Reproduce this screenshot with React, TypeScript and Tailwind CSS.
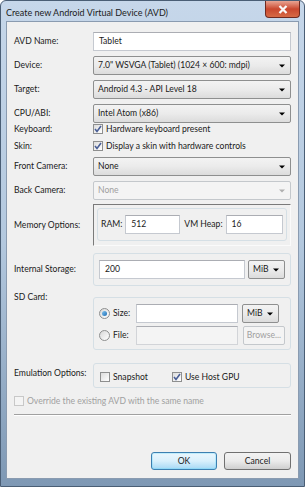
import React from "react";

const font = { fontFamily: "Lato, 'Noto Sans', sans-serif" };

const TextBox = ({ value = "", className = "", disabled = false }: { value?: string; className?: string; disabled?: boolean }) => (
  <div
    className={`h-[19px] flex items-center pl-[5px] border border-[#c5c9d0] border-t-[#abadb3] ${
      disabled ? "bg-[#f4f4f4] border-[#d2d4d8]" : "bg-white"
    } ${className}`}
  >
    {value}
  </div>
);

const Arrow = ({ color = "#000" }: { color?: string }) => (
  <svg width="6" height="4" viewBox="0 0 6 4">
    <path d="M0 0.5 L6 0.5 L3 3.5 Z" fill={color} />
  </svg>
);

const Combo = ({ value, disabled = false, className = "" }: { value: string; disabled?: boolean; className?: string }) => (
  <div
    className={`h-[19px] flex items-center justify-between pl-[4px] pr-[5px] rounded-[2px] border ${
      disabled
        ? "border-[#c4c8cc] bg-[#f4f4f4] text-[#a0a0a0]"
        : "border-[#8e8f8f] bg-gradient-to-b from-[#f3f3f3] via-[#ebebeb] to-[#dcdcdc]"
    } ${className}`}
  >
    <span>{value}</span>
    <Arrow color={disabled ? "#b0b0b0" : "#000"} />
  </div>
);

const Check = ({ checked = false, disabled = false }: { checked?: boolean; disabled?: boolean }) => (
  <div
    className={`w-[10px] h-[10px] border flex items-center justify-center ${
      disabled ? "border-[#c8c8c8] bg-[#f4f4f4]" : "border-[#8e8f8f] bg-gradient-to-br from-[#dcdcdc] to-white"
    }`}
  >
    {checked && (
      <svg width="8" height="8" viewBox="0 0 8 8">
        <path d="M1 4 L3 6.5 L7 1" fill="none" stroke="#4a5f97" strokeWidth="1.6" />
      </svg>
    )}
  </div>
);

const Radio = ({ checked = false }: { checked?: boolean }) => (
  <div className="w-[11px] h-[11px] rounded-full border border-[#8e8f8f] bg-gradient-to-br from-[#d8d8d8] to-white flex items-center justify-center">
    {checked && <div className="w-[5px] h-[5px] rounded-full bg-gradient-to-br from-[#7fc3f0] to-[#1a6fb5]" />}
  </div>
);

const Row = ({ label, children, className = "" }: { label: string; children: React.ReactNode; className?: string }) => (
  <div className={`flex items-center ${className}`}>
    <div className="w-[79px] shrink-0">{label}</div>
    <div className="flex-1">{children}</div>
  </div>
);

const GroupBox = ({ children, className = "" }: { children: React.ReactNode; className?: string }) => (
  <div className={`border border-[#d5dfe5] rounded-[3px] ${className}`}>{children}</div>
);

export default function App() {
  return (
    <div className="w-[305px] h-[487px] bg-white text-[8.6px] text-[#1a1a1a]" style={font}>
      <div className="w-[305px] h-[487px] flex flex-col rounded-t-[6px] border border-[#4a5e75] bg-gradient-to-b from-[#c6d7ea] via-[#b3c8de] to-[#7e98b4] overflow-hidden">
        {/* title bar */}
        <div className="h-[20px] flex items-start justify-between pl-[5px] shrink-0">
          <div className="pt-[5px] text-[9px] text-[#1b1b1b]">Create new Android Virtual Device (AVD)</div>
          <div className="w-[35px] h-[17px] mr-[4px] rounded-b-[4px] border border-t-0 border-[#6e2a20] bg-gradient-to-b from-[#e8a493] via-[#c9472e] to-[#d66a45] flex items-center justify-center">
            <svg width="10" height="9" viewBox="0 0 10 9">
              <path d="M1.5 1 L8.5 8 M8.5 1 L1.5 8" stroke="#ffffff" strokeWidth="2.2" />
              <path d="M1.5 1 L8.5 8 M8.5 1 L1.5 8" stroke="#f4f4f4" strokeWidth="1" />
            </svg>
          </div>
        </div>
        {/* client */}
        <div className="flex-1 mx-[5px] mb-[7px] border border-[#8a9bb0] bg-[#f0f0f0] pl-[7px] pr-[7px] pt-[10px] flex flex-col">
          <Row label="AVD Name:">
            <TextBox value="Tablet" />
          </Row>
          <Row label="Device:" className="mt-[5px]">
            <Combo value={'7.0" WSVGA (Tablet) (1024 × 600: mdpi)'} />
          </Row>
          <Row label="Target:" className="mt-[5px]">
            <Combo value="Android 4.3 - API Level 18" />
          </Row>
          <Row label="CPU/ABI:" className="mt-[5px]">
            <Combo value="Intel Atom (x86)" />
          </Row>
          <Row label="Keyboard:" className="h-[13px]">
            <div className="flex items-center gap-[3px]">
              <Check checked />
              <span>Hardware keyboard present</span>
            </div>
          </Row>
          <Row label="Skin:" className="h-[13px] mt-[4px]">
            <div className="flex items-center gap-[3px]">
              <Check checked />
              <span>Display a skin with hardware controls</span>
            </div>
          </Row>
          <Row label="Front Camera:" className="mt-[4px]">
            <Combo value="None" />
          </Row>
          <Row label="Back Camera:" className="mt-[5px]">
            <Combo value="None" disabled />
          </Row>
          <Row label="Memory Options:" className="mt-[4px]">
            <div className="border border-t-[#7a7a7a] border-l-[#7a7a7a] border-r-[#fafafa] border-b-[#fafafa] p-[3px] pb-[4px]">
              <GroupBox className="flex items-center gap-[3px] px-[3px] py-[6px]">
                <span>RAM:</span>
                <TextBox value="512" className="w-[55px]" />
                <span className="ml-[1px]">VM Heap:</span>
                <TextBox value="16" className="flex-1" />
              </GroupBox>
            </div>
          </Row>
          <Row label="Internal Storage:" className="mt-[7px]">
            <GroupBox className="flex items-center gap-[3px] px-[5px] py-[6px]">
              <TextBox value="200" className="flex-1" />
              <Combo value="MiB" className="w-[37px]" />
            </GroupBox>
          </Row>
          <div className="flex items-start mt-[5px]">
            <div className="w-[79px] shrink-0">SD Card:</div>
            <GroupBox className="flex-1 mt-[6px] flex flex-col gap-[3px] pl-[5px] pr-[5px] pt-[6px] pb-[4px]">
              <div className="flex items-center">
                <div className="w-[37px] flex items-center gap-[3px]">
                  <Radio checked />
                  <span>Size:</span>
                </div>
                <TextBox className="w-[102px]" />
                <Combo value="MiB" className="w-[37px] ml-[4px]" />
              </div>
              <div className="flex items-center">
                <div className="w-[37px] flex items-center gap-[3px]">
                  <Radio />
                  <span>File:</span>
                </div>
                <TextBox className="w-[102px]" disabled />
                <div className="ml-[5px] w-[42px] h-[19px] rounded-[2px] border border-[#c4c8cc] bg-[#f4f4f4] text-[#a0a0a0] flex items-center justify-center">
                  Browse...
                </div>
              </div>
            </GroupBox>
          </div>
          <div className="flex items-start mt-[13px]">
            <div className="w-[79px] shrink-0 pt-[4px]">Emulation Options:</div>
            <GroupBox className="flex-1 flex items-center px-[6px] pt-[7px] pb-[3px]">
              <div className="w-[72px] flex items-center gap-[3px]">
                <Check />
                <span>Snapshot</span>
              </div>
              <div className="flex items-center gap-[3px]">
                <Check checked />
                <span>Use Host GPU</span>
              </div>
            </GroupBox>
          </div>
          <div className="flex items-center gap-[3px] mt-[7px] text-[#a0a0a0]">
            <Check disabled />
            <span>Override the existing AVD with the same name</span>
          </div>
          <div className="mt-[6px] h-[2px] border-t border-[#a0a0a0] border-b border-b-white" />
          <div className="flex-1" />
          <div className="flex justify-end gap-[7px] mb-[8px]">
            <div className="w-[66px] h-[18px] rounded-[3px] border border-[#3c7fb1] bg-gradient-to-b from-[#eaf6fd] via-[#d9f0fc] to-[#a7d9f5] shadow-[inset_0_0_0_1px_#48d2fb40] flex items-center justify-center">
              OK
            </div>
            <div className="w-[67px] h-[18px] rounded-[3px] border border-[#707070] bg-gradient-to-b from-[#f2f2f2] via-[#ebebeb] to-[#cfcfcf] flex items-center justify-center">
              Cancel
            </div>
          </div>
        </div>
      </div>
    </div>
  );
}
